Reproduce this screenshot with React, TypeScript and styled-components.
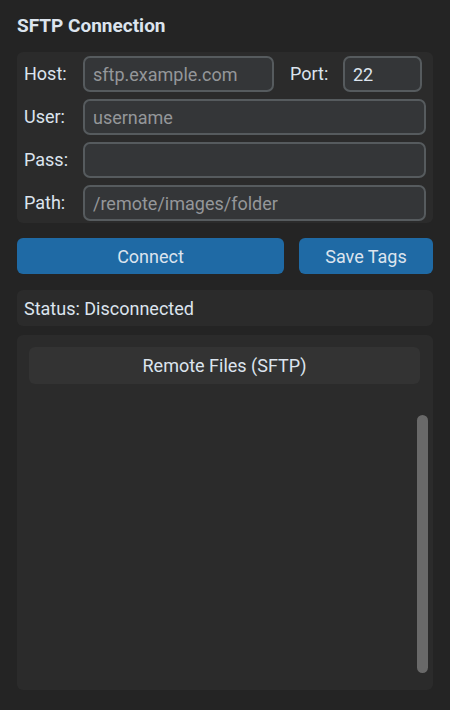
import styled, { createGlobalStyle } from "styled-components";

const GlobalStyle = createGlobalStyle`
  html, body {
    margin: 0;
    padding: 0;
    background: #242424;
  }
  body {
    font-family: Roboto, "Liberation Sans", sans-serif;
    color: #dce4ee;
  }
`;

const Page = styled.div`
  width: 450px;
  height: 710px;
  box-sizing: border-box;
  padding: 15px 17px 20px 17px;
  display: flex;
  flex-direction: column;
  background: #242424;
`;

const Title = styled.h1`
  margin: 0 0 15px 0;
  font-size: 19px;
  font-weight: 700;
  line-height: 22px;
  color: #dce4ee;
`;

const Panel = styled.div`
  background: #2b2b2b;
  border-radius: 6px;
`;

const Form = styled(Panel)`
  display: grid;
  grid-template-columns: 59px 1fr;
  align-items: center;
  row-gap: 7px;
  padding: 4px 7px 2px 7px;
`;

const Label = styled.label`
  font-size: 18px;
  line-height: 36px;
  color: #dce4ee;
`;

const HostRow = styled.div`
  display: flex;
  align-items: center;
`;

const Input = styled.input<{ $w?: number }>`
  box-sizing: border-box;
  height: 36px;
  width: ${(p) => (p.$w ? `${p.$w}px` : "100%")};
  background: #343638;
  border: 2px solid #565b5e;
  border-radius: 7px;
  padding: 0 8px;
  font-family: Roboto, "Liberation Sans", sans-serif;
  font-size: 18px;
  color: #dce4ee;
  outline: none;
  &::placeholder {
    color: #94979a;
  }
`;

const PortLabel = styled(Label)`
  flex: 0 0 53px;
  margin-left: 16px;
`;

const Buttons = styled.div`
  display: flex;
  gap: 15px;
  margin-top: 15px;
`;

const Button = styled.button<{ $grow?: boolean }>`
  height: 36px;
  flex: ${(p) => (p.$grow ? "1" : "0 0 134px")};
  background: #1f6aa5;
  border: none;
  border-radius: 6px;
  color: #dce4ee;
  font-family: Roboto, "Liberation Sans", sans-serif;
  font-size: 18px;
`;

const Status = styled(Panel)`
  margin-top: 16px;
  height: 36px;
  padding: 0 7px;
  display: flex;
  align-items: center;
  font-size: 18px;
`;

const Files = styled(Panel)`
  margin-top: 9px;
  flex: 1;
  display: flex;
  flex-direction: column;
  padding: 12px 5px 17px 12px;
`;

const FilesHeader = styled.div`
  height: 37px;
  margin-right: 8px;
  background: #333333;
  border-radius: 6px;
  display: flex;
  align-items: center;
  justify-content: center;
  font-size: 18px;
`;

const FilesBody = styled.div`
  flex: 1;
  display: flex;
  justify-content: flex-end;
  padding-top: 31px;
`;

const ScrollThumb = styled.div`
  width: 11px;
  height: 100%;
  background: #696969;
  border-radius: 6px;
`;

export default function App() {
  return (
    <>
      <GlobalStyle />
      <Page>
        <Title>SFTP Connection</Title>
        <Form>
          <Label>Host:</Label>
          <HostRow>
            <Input $w={191} placeholder="sftp.example.com" />
            <PortLabel>Port:</PortLabel>
            <Input $w={79} defaultValue="22" />
          </HostRow>
          <Label>User:</Label>
          <Input placeholder="username" />
          <Label>Pass:</Label>
          <Input type="password" />
          <Label>Path:</Label>
          <Input placeholder="/remote/images/folder" />
        </Form>
        <Buttons>
          <Button $grow>Connect</Button>
          <Button>Save Tags</Button>
        </Buttons>
        <Status>Status: Disconnected</Status>
        <Files>
          <FilesHeader>Remote Files (SFTP)</FilesHeader>
          <FilesBody>
            <ScrollThumb />
          </FilesBody>
        </Files>
      </Page>
    </>
  );
}
